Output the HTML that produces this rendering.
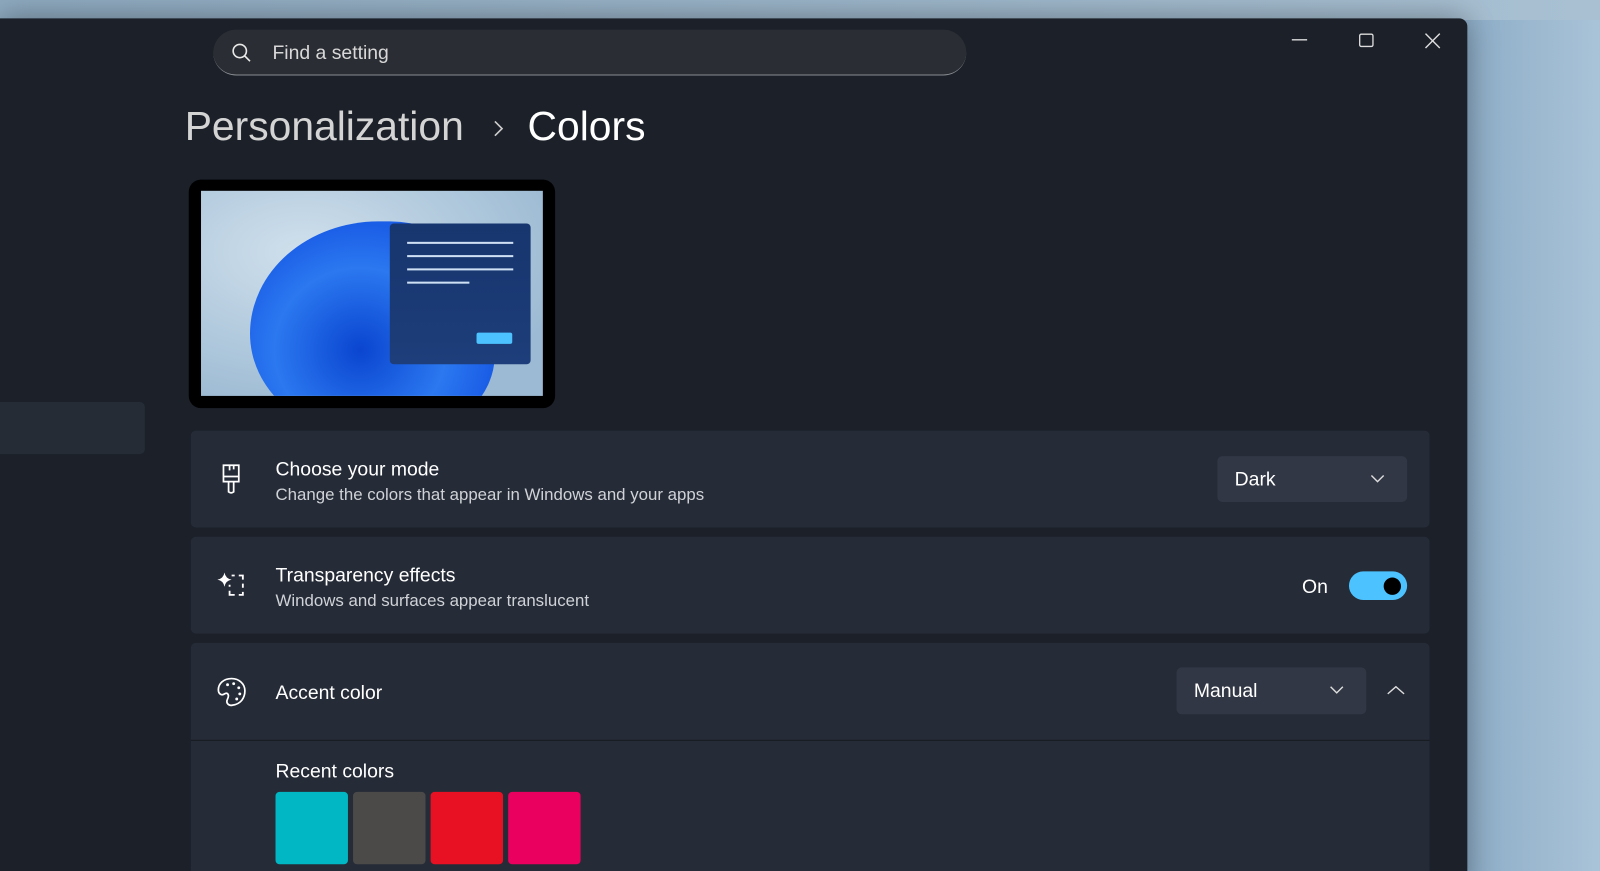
<!DOCTYPE html>
<html><head><style>
*{margin:0;padding:0;box-sizing:border-box}
html,body{width:1600px;height:871px;overflow:hidden}
body{background:linear-gradient(90deg,#6f8ea8 0%,#88a9c4 90%,#a9c3d8 100%);font-family:"Liberation Sans",sans-serif;position:relative}
#w{position:absolute;left:0;top:0;width:1568px;height:854px;transform:scale(1.0204);transform-origin:0 0}
.top{position:absolute;left:0;top:0;width:1600px;height:20px;background:linear-gradient(90deg,#8ea9bf,#a8c0d2)}
.win{position:absolute;left:0;top:18px;width:1438px;height:860px;background:#1b2029;border-top-right-radius:8px;box-shadow:0 0 30px rgba(0,0,0,.35)}
.abs{position:absolute}
.search{left:209px;top:11px;width:738px;height:45px;border-radius:23px;background:#2a2d33;border-bottom:1px solid #8a8d92}
.card{position:absolute;left:187px;width:1214px;background:#252b37;border-radius:5px}
.t{color:#fff;font-size:19px;position:absolute}
.s{color:#cfd2d6;font-size:16.5px;position:absolute}
.dd{position:absolute;background:#313744;border-radius:5px;color:#fff;font-size:19px}
</style></head><body>
<div class="top"></div>
<div id="w">
<div class="win">
 <div class="abs" style="left:0;top:376px;width:142px;height:51px;background:#262c35;border-radius:0 5px 5px 0"></div>
 <div class="abs search">
  <svg class="abs" style="left:17px;top:12px" width="22" height="22" viewBox="0 0 22 22"><circle cx="9" cy="9" r="6.5" fill="none" stroke="#e8e8e8" stroke-width="1.6"/><line x1="13.5" y1="13.5" x2="19" y2="19" stroke="#e8e8e8" stroke-width="1.6"/></svg>
  <div class="abs" style="left:58px;top:13px;color:#d8d8d8;font-size:19px">Find a setting</div>
 </div>
 <svg class="abs" style="left:1264px;top:12px" width="156" height="20"><line x1="2" y1="9" x2="17" y2="9" stroke="#ddd" stroke-width="1.3"/><rect x="68.5" y="3.5" width="13" height="12" rx="1.5" fill="none" stroke="#ddd" stroke-width="1.3"/><path d="M133 3L147 17M147 3L133 17" stroke="#ddd" stroke-width="1.4"/></svg>
 <div class="abs" style="left:181px;top:84px;color:#d4d4d4;font-size:40px">Personalization</div>
 <svg class="abs" style="left:482px;top:98px" width="14" height="20"><path d="M3 3L10 10L3 17" fill="none" stroke="#ccc" stroke-width="1.6"/></svg>
 <div class="abs" style="left:517px;top:84px;color:#fff;font-size:40px">Colors</div>
 <div class="abs" style="left:185px;top:158px;width:359px;height:224px;background:#000;border-radius:12px;overflow:hidden">
  <div class="abs" style="left:12px;top:11px;width:335px;height:201px;background:radial-gradient(ellipse at 30% 30%,#d0e0ec,#9cbad3 80%);overflow:hidden">
   <div class="abs" style="left:48px;top:30px;width:240px;height:210px;border-radius:55% 45% 40% 50%;background:radial-gradient(ellipse at 45% 60%,#0a45d0,#2b78f0 45%,#1a5de6 70%)"></div>
   <div class="abs" style="left:185px;top:32px;width:138px;height:138px;background:linear-gradient(180deg,#17356e,#1d3e7a);border-radius:4px">
    <div class="abs" style="left:17px;top:18px;width:104px;height:2px;background:#cfe0f5"></div>
    <div class="abs" style="left:17px;top:31px;width:104px;height:2px;background:#cfe0f5"></div>
    <div class="abs" style="left:17px;top:44px;width:104px;height:2px;background:#cfe0f5"></div>
    <div class="abs" style="left:17px;top:57px;width:61px;height:2px;background:#cfe0f5"></div>
    <div class="abs" style="left:85px;top:107px;width:35px;height:11px;background:#4cc2ff;border-radius:2px"></div>
   </div>
  </div>
 </div>
</div>
<div class="card" style="top:422px;height:95px">
 <svg class="abs" style="left:28px;top:32px" width="24" height="32" viewBox="0 0 24 32"><path d="M4 2H19V18H4Z M4 13H19 M10 2V7 M14 2V6 M9 18V28Q11.5 30 14 28V18" fill="none" stroke="#fff" stroke-width="1.7"/></svg>
 <div class="t" style="left:83px;top:28px">Choose your mode</div>
 <div class="s" style="left:83px;top:54px">Change the colors that appear in Windows and your apps</div>
 <div class="dd" style="left:1006px;top:25px;width:186px;height:45px"><span class="abs" style="left:17px;top:13px">Dark</span><svg class="abs" style="left:150px;top:17px" width="14" height="10"><path d="M1 2L7 8L13 2" fill="none" stroke="#ddd" stroke-width="1.4"/></svg></div>
</div>
<div class="card" style="top:526px;height:95px">
 <svg class="abs" style="left:24px;top:32px" width="34" height="30" viewBox="0 0 34 30"><path d="M9 3Q10 9 16 10Q10 11 9 17Q8 11 2 10Q8 9 9 3Z" fill="#fff"/><path d="M16 6H19M23 6H27V10M27 14V18M27 22V25H23M19 25H14V21M14 17V15" fill="none" stroke="#fff" stroke-width="1.8"/></svg>
 <div class="t" style="left:83px;top:28px">Transparency effects</div>
 <div class="s" style="left:83px;top:54px">Windows and surfaces appear translucent</div>
 <div class="t" style="left:1089px;top:39px">On</div>
 <div class="abs" style="left:1135px;top:34px;width:57px;height:28px;border-radius:14px;background:#4cc2ff"><div class="abs" style="left:34px;top:6px;width:17px;height:17px;border-radius:50%;background:#000"></div></div>
</div>
<div class="card" style="top:630px;height:241px;border-radius:5px 5px 0 0">
 <div class="abs" style="left:0;top:95px;width:1214px;height:1px;background:#161a21"></div>
 <svg class="abs" style="left:24px;top:32px" width="32" height="32" viewBox="0 0 32 32"><path d="M16 3C8 3 3 8 3 14C3 18 6 20 9 18C12 16 14 19 12 23C10 27 13 30 17 29C25 28 29 22 29 15C29 8 23 3 16 3Z" fill="none" stroke="#fff" stroke-width="1.7"/><circle cx="12" cy="9" r="1.4" fill="#fff"/><circle cx="18" cy="8" r="1.4" fill="#fff"/><circle cx="23" cy="12" r="1.4" fill="#fff"/><circle cx="24" cy="18" r="1.4" fill="#fff"/><circle cx="21" cy="23" r="1.4" fill="#fff"/></svg>
 <div class="t" style="left:83px;top:39px">Accent color</div>
 <div class="dd" style="left:966px;top:24px;width:186px;height:46px"><span class="abs" style="left:17px;top:13px">Manual</span><svg class="abs" style="left:150px;top:17px" width="14" height="10"><path d="M1 2L7 8L13 2" fill="none" stroke="#ddd" stroke-width="1.4"/></svg></div>
 <svg class="abs" style="left:1172px;top:42px" width="18" height="10"><path d="M1 8L9 1L17 8" fill="none" stroke="#ddd" stroke-width="1.4"/></svg>
 <div class="t" style="left:83px;top:116px">Recent colors</div>
 <div class="abs" style="left:83px;top:146px;width:71px;height:71px;border-radius:4px;background:#00b7c3"></div>
 <div class="abs" style="left:159px;top:146px;width:71px;height:71px;border-radius:4px;background:#4c4a48"></div>
 <div class="abs" style="left:235px;top:146px;width:71px;height:71px;border-radius:4px;background:#e81123"></div>
 <div class="abs" style="left:311px;top:146px;width:71px;height:71px;border-radius:4px;background:#ea005e"></div>
</div>
</div>
</body></html>
